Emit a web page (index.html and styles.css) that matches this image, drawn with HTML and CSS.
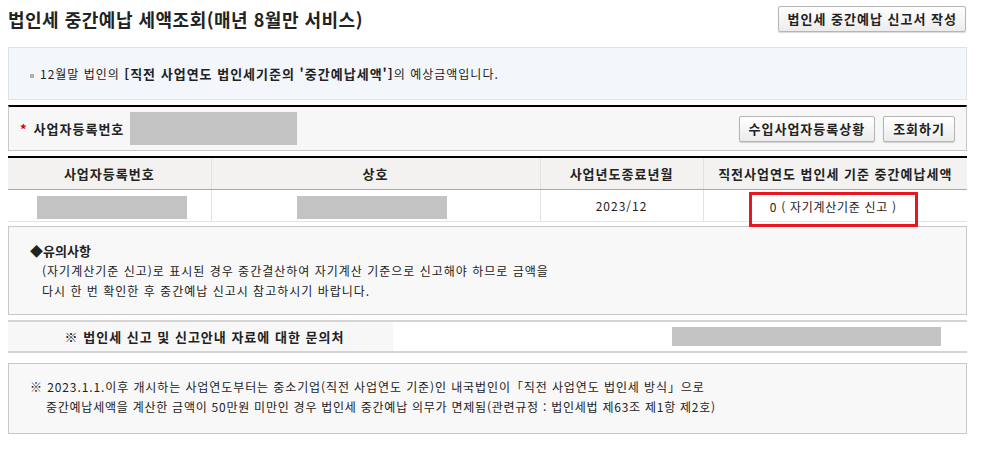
FILE: index.html
```html
<!DOCTYPE html>
<html lang="ko">

<head>
  <meta charset="UTF-8">
  <meta name="viewport" content="width=device-width, initial-scale=1.0">
  <title>법인세 중간예납 세액조회</title>

  <link rel="stylesheet" href="styles.css">
</head>

<body>
  <main class="wrap">
    <header class="page-head">
      <h1>법인세 중간예납 세액조회(매년 8월만 서비스)</h1>
      <button class="btn">법인세 중간예납 신고서 작성</button>
    </header>

    <section class="info-box">
      <p><span class="bullet"></span>12월말 법인의 <strong>[직전 사업연도 법인세기준의 '중간예납세액']</strong>의 예상금액입니다.</p>
    </section>

    <section class="search-box">
      <label class="search-label"><span class="req">*</span>사업자등록번호</label>
      <span class="mask input-mask"></span>
      <div class="search-btns">
        <button class="btn">수입사업자등록상황</button>
        <button class="btn">조회하기</button>
      </div>
    </section>

    <table class="result">
      <colgroup>
        <col style="width: 203px">
        <col style="width: 329px">
        <col style="width: 163px">
        <col>
      </colgroup>
      <thead>
        <tr>
          <th>사업자등록번호</th>
          <th>상호</th>
          <th>사업년도종료년월</th>
          <th>직전사업연도 법인세 기준 중간예납세액</th>
        </tr>
      </thead>
      <tbody>
        <tr>
          <td><span class="mask cell-mask mask-biz"></span></td>
          <td><span class="mask cell-mask mask-name"></span></td>
          <td>2023/12</td>
          <td><span class="highlight">0 ( 자기계산기준 신고 )</span></td>
        </tr>
      </tbody>
    </table>

    <section class="note-box">
      <p class="note-title">◆유의사항</p>
      <p class="note-text">(자기계산기준 신고)로 표시된 경우 중간결산하여 자기계산 기준으로 신고해야 하므로 금액을<br>다시 한 번 확인한 후 중간예납 신고시 참고하시기 바랍니다.</p>
    </section>

    <section class="contact">
      <div class="contact-label">※ 법인세 신고 및 신고안내 자료에 대한 문의처</div>
      <div class="contact-value"><span class="mask contact-mask"></span></div>
    </section>

    <section class="notice">
      <p>※ 2023.1.1.이후 개시하는 사업연도부터는 중소기업(직전 사업연도 기준)인 내국법인이「직전 사업연도 법인세 방식」으로</p>
      <p class="indent">중간예납세액을 계산한 금액이 50만원 미만인 경우 법인세 중간예납 의무가 면제됨(관련규정 : 법인세법 제63조 제1항 제2호)</p>
    </section>
  </main>
</body>

</html>
```

FILE: styles.css
```css
body {
  color: #222;
  font-family: "Noto Sans CJK KR", "Noto Sans", sans-serif;
  font-size: 12px;
  letter-spacing: 1px;
  margin: 0;
  padding: 0 8px;
}

p {
  margin: 0;
}

.wrap {
  width: 959px;
}

.btn {
  background: linear-gradient(#ffffff, #ececec);
  border: 1px solid #b5b5b5;
  border-radius: 2px;
  box-shadow: 0 1px 1px rgba(0, 0, 0, 0.15);
  color: #222;
  cursor: pointer;
  font-family: inherit;
  font-size: 13px;
  font-weight: 700;
  height: 26px;
  letter-spacing: 1px;
  line-height: 22px;
  padding: 0 9px;
}

.page-head {
  align-items: center;
  display: flex;
  height: 37px;
  justify-content: space-between;
}

.page-head h1 {
  font-size: 18px;
  font-weight: 700;
  letter-spacing: 0.5px;
  margin: 0;
}

.page-head .btn {
  letter-spacing: 1px;
  margin-right: 1px;
  padding: 0 8px 0 9px;
}

.info-box {
  background: #f3f6fa;
  border: 1px solid #dde3ec;
  height: 51px;
  line-height: 51px;
  margin-top: 10px;
  padding-left: 21px;
}

.info-box strong {
  font-size: 13px;
}

.bullet {
  background: #b0b0b0;
  display: inline-block;
  height: 4px;
  margin-right: 6px;
  vertical-align: middle;
  width: 4px;
}

.search-box {
  align-items: center;
  background: #f7f7f7;
  border: 1px solid #c8c8c8;
  border-top: 2px solid #000;
  display: flex;
  height: 43px;
  margin-top: 5px;
  padding: 0 11px;
}

.search-label {
  font-size: 13px;
  font-weight: 700;
}

.req {
  color: #c00;
  margin-right: 6px;
}

.mask {
  background: #c3c3c3;
  display: inline-block;
}

.input-mask {
  height: 33px;
  margin-left: 6px;
  width: 167px;
}

.search-btns {
  display: flex;
  gap: 8px;
  margin-left: auto;
}

.result {
  border-collapse: collapse;
  border-top: 2px solid #000;
  margin-top: 5px;
  table-layout: fixed;
  width: 959px;
}

.result th {
  background: #f3f2f1;
  border-bottom: 1px solid #a8a8a8;
  border-left: 1px solid #e2e2e2;
  font-size: 13px;
  font-weight: 700;
  height: 31px;
  padding: 0;
}

.result td {
  border-bottom: 1px solid #e4e4e4;
  border-left: 1px solid #e2e2e2;
  height: 31px;
  padding: 0;
  text-align: center;
}

.result th:first-child,
.result td:first-child {
  border-left: 0;
}

.cell-mask {
  height: 23px;
  margin-top: 3px;
  vertical-align: top;
  width: 150px;
}

.mask-biz {
  margin-left: 5px;
}

.mask-name {
  margin-right: 7px;
}

.highlight {
  border: 3px solid #e8161f;
  display: inline-block;
  height: 29px;
  left: -2px;
  letter-spacing: 0.7px;
  line-height: 24px;
  margin: 2px 0 -6px;
  position: relative;
  vertical-align: top;
  width: 163px;
}

.note-box {
  background: #f8f8f8;
  border: 1px solid #c8c8c8;
  height: 59px;
  margin-top: 4px;
  padding: 14px 21px;
}

.note-box p {
  line-height: 20px;
}

.note-title {
  font-size: 13px;
  font-weight: 700;
  letter-spacing: 0;
}

.note-text {
  padding-left: 12px;
}

.contact {
  border-bottom: 2px solid #d4d4d4;
  border-top: 2px solid #d4d4d4;
  display: flex;
  height: 29px;
  margin-top: 5px;
}

.contact-label {
  align-items: center;
  background: #f7f7f7;
  display: flex;
  font-size: 13px;
  font-weight: 700;
  justify-content: center;
  padding-left: 8px;
  width: 377px;
}

.contact-value {
  align-items: center;
  display: flex;
  flex: 1;
  justify-content: flex-end;
  padding-right: 26px;
}

.contact-mask {
  height: 19px;
  width: 269px;
}

.notice {
  background: #f8f8f8;
  border: 1px solid #c8c8c8;
  margin-top: 10px;
  padding: 13px 21px 16px 21px;
}

.notice p {
  letter-spacing: 0.9px;
  line-height: 20px;
}

.notice .indent {
  letter-spacing: 0.75px;
  padding-left: 16px;
}
```
